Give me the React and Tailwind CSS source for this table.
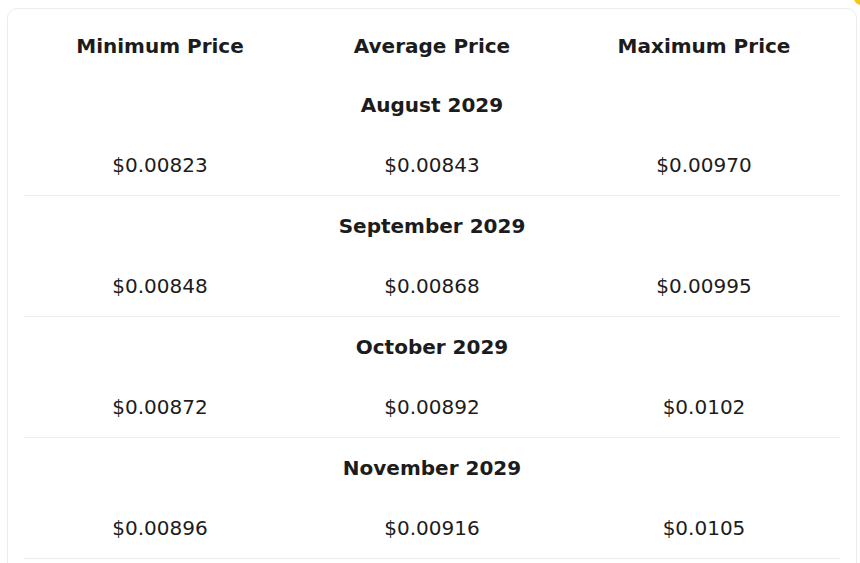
export default function App() {
  const months = [
    { m: "August 2029", v: ["$0.00823", "$0.00843", "$0.00970"] },
    { m: "September 2029", v: ["$0.00848", "$0.00868", "$0.00995"] },
    { m: "October 2029", v: ["$0.00872", "$0.00892", "$0.0102"] },
    { m: "November 2029", v: ["$0.00896", "$0.00916", "$0.0105"] },
  ];
  return (
    <div className="relative h-[563px] w-[860px] overflow-hidden bg-white pl-[7px] pr-[3px] pt-[8px] text-[#1c1c1c]" style={{ fontFamily: '"DejaVu Sans", sans-serif' }}>
      <div className="absolute right-[-8px] top-[-9px] h-[14px] w-[14px] rounded-full bg-[#f5c518]" />
      <div className="h-[600px] rounded-[10px] border border-[#ececec] px-[16px]">
        <div className="grid grid-cols-3 pb-[17px] pt-[25px] text-[20px] font-bold leading-[24px]">
          <div className="text-center">Minimum Price</div>
          <div className="text-center">Average Price</div>
          <div className="text-center">Maximum Price</div>
        </div>
        {months.map((g) => (
          <div key={g.m} className="border-b border-[#ececec]">
            <div className="pt-[18px] text-center text-[20px] font-bold leading-[24px]">{g.m}</div>
            <div className="grid grid-cols-3 pb-[18px] pt-[36px] text-[20px] leading-[24px]">
              {g.v.map((x, i) => (
                <div key={i} className="text-center">{x}</div>
              ))}
            </div>
          </div>
        ))}
      </div>
    </div>
  );
}
